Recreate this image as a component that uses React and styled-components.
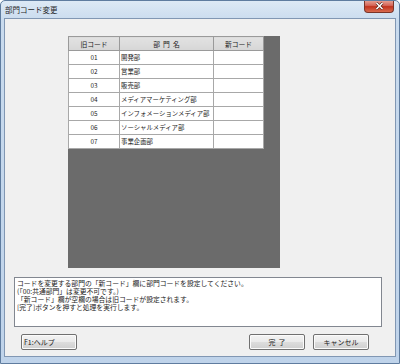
import React from "react";
import styled, { createGlobalStyle } from "styled-components";

const GlobalStyle = createGlobalStyle`
  html, body {
    margin: 0;
    padding: 0;
    background: #ffffff;
  }
  body {
    font-family: "Noto Sans CJK JP", "Noto Sans", sans-serif;
  }
`;

const rows = [
  { code: "01", name: "開発部" },
  { code: "02", name: "営業部" },
  { code: "03", name: "販売部" },
  { code: "04", name: "メディアマーケティング部" },
  { code: "05", name: "インフォメーションメディア部" },
  { code: "06", name: "ソーシャルメディア部" },
  { code: "07", name: "事業企画部" },
];

const messages = [
  "コードを変更する部門の「新コード」欄に部門コードを設定してください。",
  "(「00:共通部門」は変更不可です。)",
  "「新コード」欄が空欄の場合は旧コードが設定されます。",
  "[完了]ボタンを押すと処理を実行します。",
];

const Window = styled.div`
  width: 400px;
  height: 364px;
  box-sizing: border-box;
  display: flex;
  flex-direction: column;
  border: 1px solid #5f7c9f;
  border-radius: 5px 5px 0 0;
  background: linear-gradient(to bottom, #dde9f5 0px, #c9dbee 20px, #bfd3ea 100%);
  overflow: hidden;
`;

const TitleBar = styled.div`
  height: 17px;
  display: flex;
  align-items: flex-start;
  justify-content: space-between;
  padding-left: 4px;
`;

const Title = styled.span`
  font-size: 7.5px;
  line-height: 8px;
  margin-top: 5px;
  color: #1e1e1e;
`;

const CloseButton = styled.div`
  width: 28px;
  height: 12px;
  margin-right: 5px;
  margin-top: -1px;
  border: 1px solid #7a3428;
  border-top: none;
  border-radius: 0 0 4px 4px;
  background: linear-gradient(to bottom, #e9a99b 0%, #d5675a 45%, #c2331e 55%, #d86b4f 100%);
  display: flex;
  align-items: center;
  justify-content: center;
`;

const Client = styled.div`
  flex: 1;
  margin: 0 3px 6px 3px;
  border: 1px solid #8197b3;
  background: #f0f0f0;
  display: flex;
  flex-direction: column;
  padding: 17px 0 0 0;
`;

const GridArea = styled.div`
  margin-left: 63px;
  width: 212px;
  height: 232px;
  background: #6b6b6b;
`;

const Table = styled.table`
  border-collapse: collapse;
  width: 195px;
  table-layout: fixed;
  background: #ffffff;
`;

const HeadCell = styled.th`
  height: 13px;
  padding: 0;
  font-weight: normal;
  font-size: 6.8px;
  line-height: 8px;
  color: #1a1a1a;
  background: linear-gradient(to bottom, #e2e2e2, #d6d6d6);
  border: 1px solid #9a9a9a;
  text-align: center;
  white-space: pre;
`;

const Cell = styled.td`
  height: 13px;
  padding: 0 0 0 ${(p) => (p.left ? "1px" : "0")};
  font-size: 6.4px;
  line-height: 8px;
  color: #1a1a1a;
  border: 1px solid #a8a8a8;
  text-align: ${(p) => (p.left ? "left" : "center")};
  white-space: nowrap;
  overflow: hidden;
`;

const MessageBox = styled.div`
  margin: 9px 0 0 9px;
  width: 368px;
  height: 50px;
  box-sizing: border-box;
  border: 1px solid #828790;
  background: #ffffff;
  padding: 1px 0 0 2px;
  font-size: 6.8px;
  line-height: 8px;
  color: #1a1a1a;
`;

const Line = styled.div`
  white-space: nowrap;
`;

const ButtonRow = styled.div`
  display: flex;
  margin-top: 7px;
  padding: 0 26px 0 16px;
`;

const Spacer = styled.div`
  flex: 1;
`;

const Button = styled.div`
  width: 56px;
  height: 16px;
  box-sizing: border-box;
  margin-left: ${(p) => p.gap || 0}px;
  border: 1px solid #707070;
  border-radius: 2px;
  background: linear-gradient(to bottom, #f3f3f3 0%, #ebebeb 48%, #dddddd 52%, #cfcfcf 100%);
  box-shadow: inset 0 0 0 1px #fbfbfb;
  display: flex;
  align-items: center;
  justify-content: ${(p) => (p.left ? "flex-start" : "center")};
  padding-left: ${(p) => (p.left ? "2px" : "0")};
  font-size: 7px;
  color: #1a1a1a;
  white-space: pre;
`;

export default function App() {
  return (
    <>
      <GlobalStyle />
      <Window>
        <TitleBar>
          <Title>部門コード変更</Title>
          <CloseButton>
            <svg width="9" height="8" viewBox="0 0 9 8">
              <path d="M1.5 1 L7.5 7 M7.5 1 L1.5 7" stroke="#4a1a12" strokeWidth="2.6" />
              <path d="M1.5 1 L7.5 7 M7.5 1 L1.5 7" stroke="#ffffff" strokeWidth="1.6" />
            </svg>
          </CloseButton>
        </TitleBar>
        <Client>
          <GridArea>
            <Table>
              <colgroup>
                <col style={{ width: 51 }} />
                <col style={{ width: 94 }} />
                <col style={{ width: 50 }} />
              </colgroup>
              <thead>
                <tr>
                  <HeadCell>旧コード</HeadCell>
                  <HeadCell>部  門  名</HeadCell>
                  <HeadCell>新コード</HeadCell>
                </tr>
              </thead>
              <tbody>
                {rows.map((r) => (
                  <tr key={r.code}>
                    <Cell>{r.code}</Cell>
                    <Cell left>{r.name}</Cell>
                    <Cell />
                  </tr>
                ))}
              </tbody>
            </Table>
          </GridArea>
          <MessageBox>
            {messages.map((m) => (
              <Line key={m}>{m}</Line>
            ))}
          </MessageBox>
          <ButtonRow>
            <Button left>F1:ヘルプ</Button>
            <Spacer />
            <Button>完  了</Button>
            <Button gap={8}>キャンセル</Button>
          </ButtonRow>
        </Client>
      </Window>
    </>
  );
}
